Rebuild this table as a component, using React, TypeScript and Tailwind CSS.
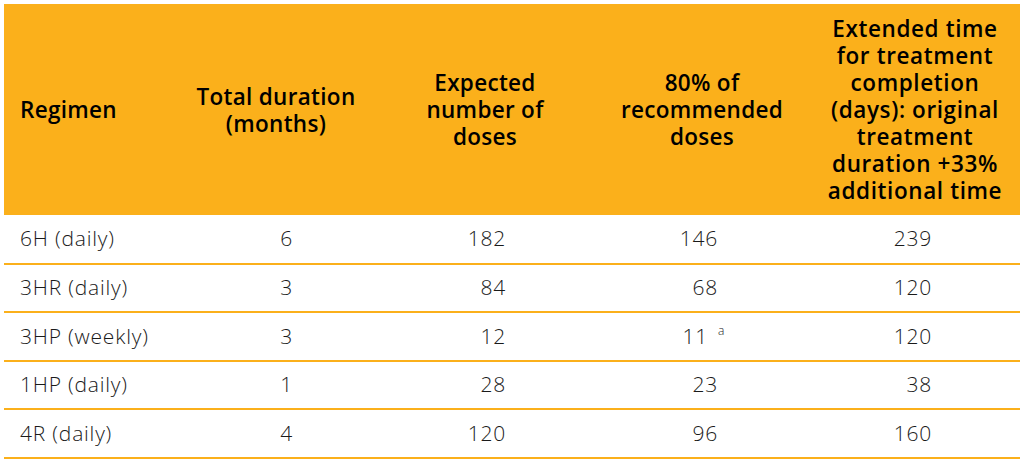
const rows = [
  { regimen: "6H (daily)", months: "6", doses: "182", eighty: "146", extended: "239" },
  { regimen: "3HR (daily)", months: "3", doses: "84", eighty: "68", extended: "120" },
  { regimen: "3HP (weekly)", months: "3", doses: "12", eighty: "11", note: "a", extended: "120" },
  { regimen: "1HP (daily)", months: "1", doses: "28", eighty: "23", extended: "38" },
  { regimen: "4R (daily)", months: "4", doses: "120", eighty: "96", extended: "160" },
];

export default function App() {
  return (
    <div
      className="w-[1024px] h-[461px] bg-white pl-[4px] pt-[4px] overflow-hidden"
      style={{ fontFamily: '"Open Sans", "Noto Sans", sans-serif' }}
    >
      <table className="w-[1016px] border-collapse table-fixed">
        <colgroup>
          <col className="w-[172px]" />
          <col className="w-[200px]" />
          <col className="w-[218px]" />
          <col className="w-[216px]" />
          <col className="w-[210px]" />
        </colgroup>
        <thead>
          <tr className="bg-[#fbb01b] text-black text-[22.5px] tracking-[0.3px] font-semibold leading-[27px] h-[211px]">
            <th className="text-left pl-4 font-semibold">Regimen</th>
            <th className="text-center font-semibold">
              Total duration
              <br />
              (months)
            </th>
            <th className="text-center font-semibold">
              Expected
              <br />
              number of
              <br />
              doses
            </th>
            <th className="text-center font-semibold">
              80% of
              <br />
              recommended
              <br />
              doses
            </th>
            <th className="text-center font-semibold tracking-[0.6px]">
              Extended time
              <br />
              for treatment
              <br />
              completion
              <br />
              (days): original
              <br />
              treatment
              <br />
              duration +33%
              <br />
              additional time
            </th>
          </tr>
        </thead>
        <tbody className="text-[21px] tracking-[0.8px] font-light text-[#1a1a1a]">
          {rows.map((r) => (
            <tr key={r.regimen} className="h-[48.5px] border-b-2 border-[#fbb01b]">
              <td className="pl-4">{r.regimen}</td>
              <td className="text-right pr-[83px]">{r.months}</td>
              <td className="text-right pr-[88px]">{r.doses}</td>
              <td className="text-right pr-[92px] whitespace-nowrap">
                {r.eighty}
                {r.note && (
                  <sup className="inline-block w-0 pl-[10px] text-[12px] align-[3px] overflow-visible">
                    {r.note}
                  </sup>
                )}
              </td>
              <td className="text-right pr-[88px]">{r.extended}</td>
            </tr>
          ))}
        </tbody>
      </table>
    </div>
  );
}
